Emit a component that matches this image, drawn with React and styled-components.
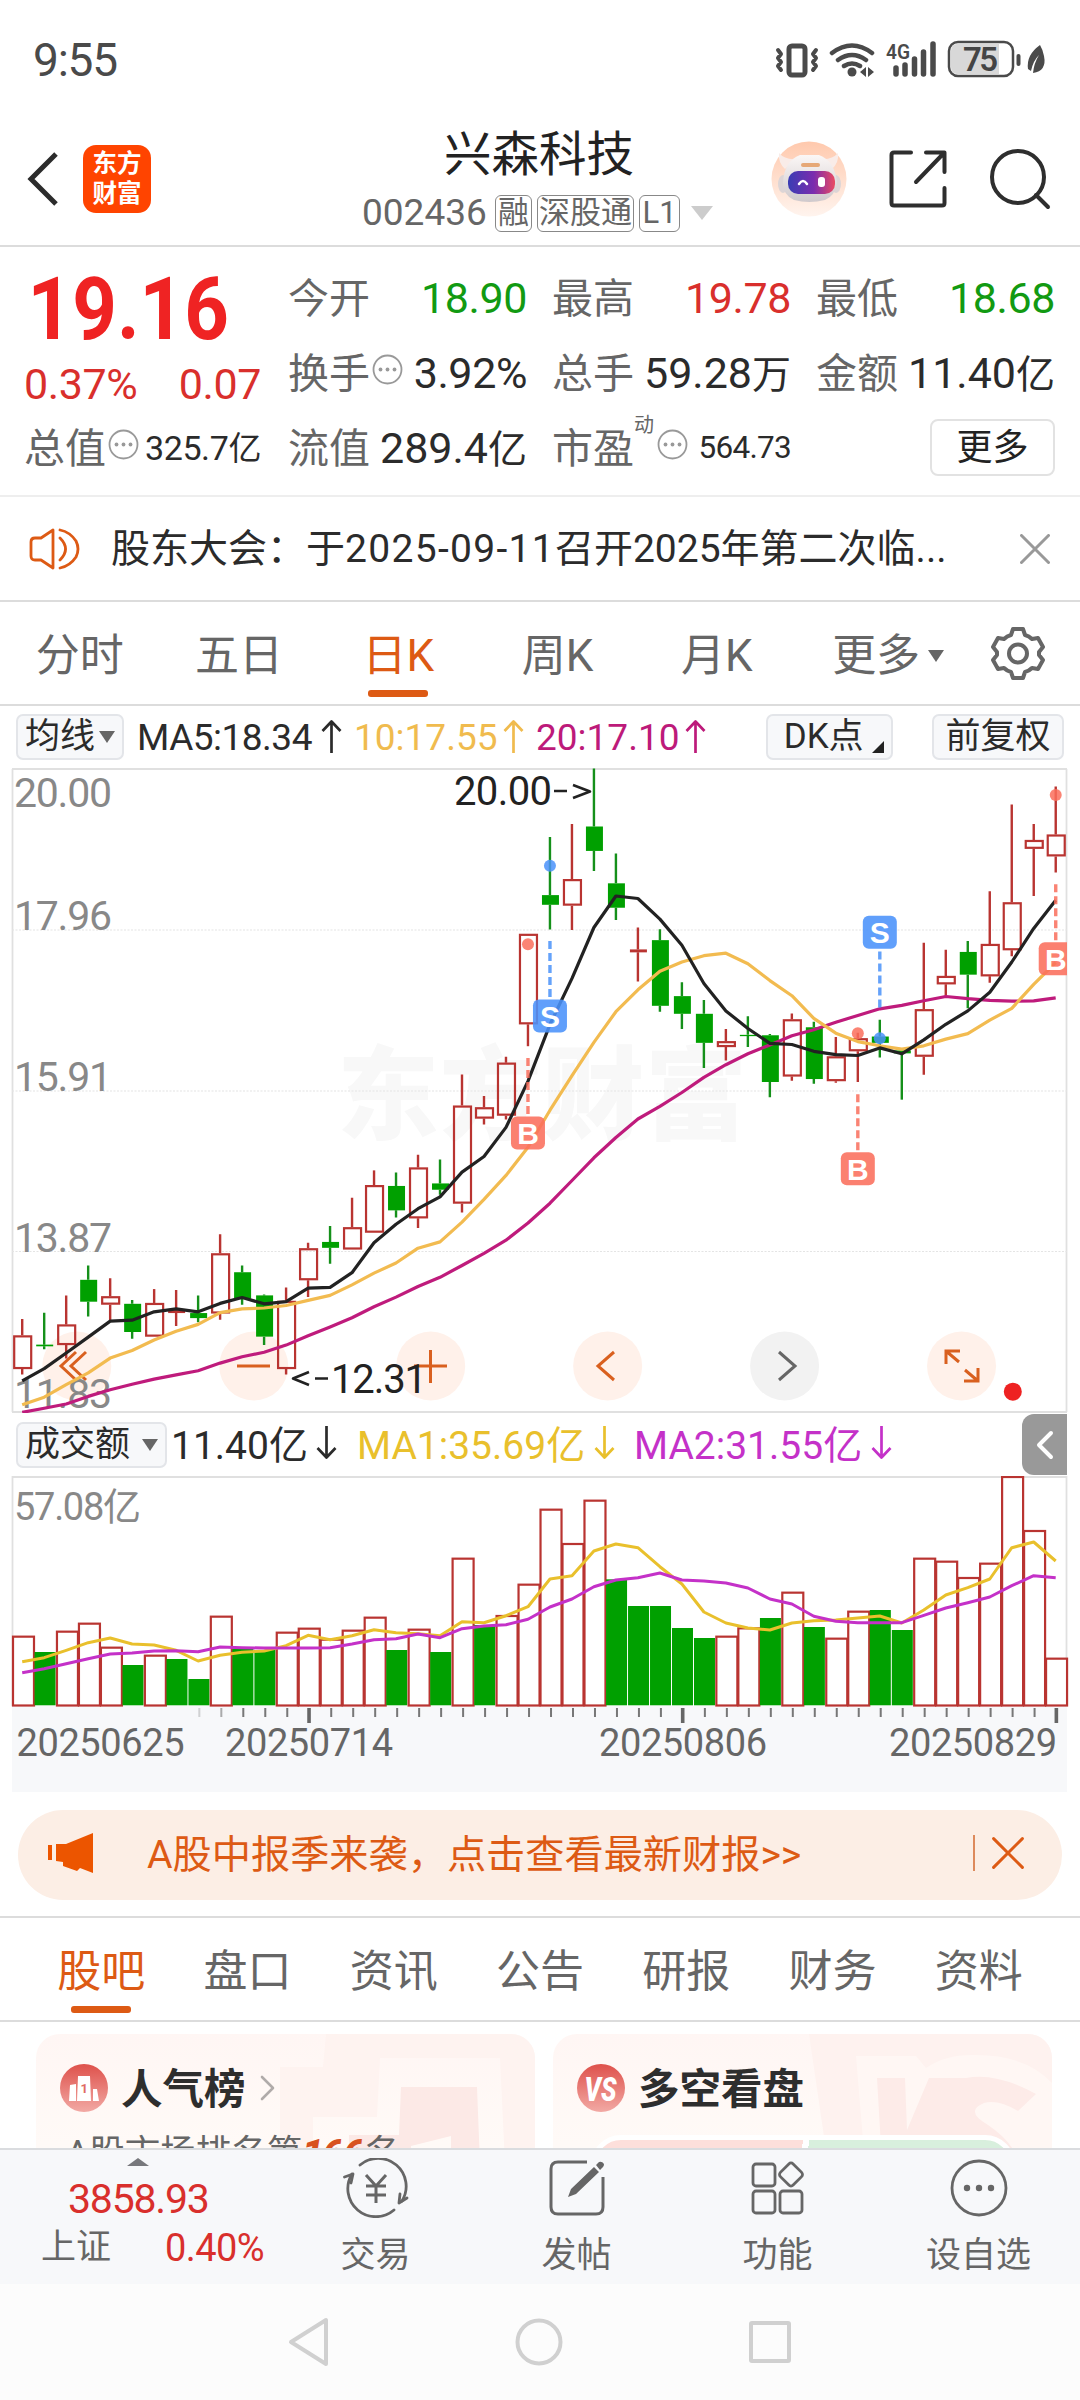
import styled, { createGlobalStyle } from "styled-components";

const ORANGE = "#dd5a14";
const RED = "#d92f2c";
const GREEN = "#129a12";
const DARK = "#2b2b2b";
const GREY = "#666";

const GlobalStyle = createGlobalStyle`
  * { box-sizing: border-box; }
  body {
    margin: 0;
    background: #fff;
    font-family: Roboto, "Noto Sans CJK SC", sans-serif;
    color: ${DARK};
  }
  svg { display: block; flex: none; }
`;

const Screen = styled.div`
  width: 1080px;
  height: 2400px;
  overflow: hidden;
  display: flex;
  flex-direction: column;
  background: #fff;
`;

/* ---------- status bar ---------- */
const StatusBar = styled.div`
  height: 116px;
  padding: 3px 33px 0 33px;
  display: flex;
  align-items: center;
  justify-content: space-between;
  color: #4a4a4a;
  font-size: 46px;
  letter-spacing: -1.2px;
`;

/* ---------- header ---------- */
const Header = styled.header`
  height: 131px;
  border-bottom: 2px solid #dcdcdc;
  padding: 0 29px 0 26px;
  display: grid;
  grid-template-columns: 338px 1fr 284px;
`;
const HeaderSide = styled.div`
  display: flex;
  align-items: center;
  justify-content: ${({ $end }) => ($end ? "flex-end" : "flex-start")};
  gap: ${({ $gap }) => $gap}px;
  padding-bottom: 3px;
`;
const Logo = styled.div`
  width: 68px;
  height: 68px;
  border-radius: 13px;
  background: #ff4400;
  color: #fff;
  font-size: 24.5px;
  font-weight: 700;
  line-height: 30px;
  padding-top: 4px;
  text-align: center;
`;
const TitleBlock = styled.div`
  padding-top: 11px;
`;
const StockName = styled.div`
  height: 56px;
  line-height: 56px;
  font-size: 47.5px;
  color: #222;
  padding-left: 80px;
`;
const StockMeta = styled.div`
  margin-top: 11px;
  display: flex;
  align-items: center;
  gap: 5px;
  color: ${GREY};
  font-size: 37px;
  line-height: 38px;
`;
const Code = styled.span`
  width: 126px;
  margin-left: -2px;
  margin-right: 2px;
`;
const Tag = styled.span`
  height: 37px;
  width: ${({ $w }) => $w}px;
  border: 1.5px solid #888;
  border-radius: 6px;
  font-size: 31px;
  line-height: 33px;
  text-align: center;
`;
const Caret = styled.i`
  width: 0;
  height: 0;
  margin: ${({ $m }) => $m || "0"};
  border: ${({ $s }) => $s || 8}px solid transparent;
  border-top: ${({ $h }) => $h || 12}px solid ${({ $c }) => $c || GREY};
  border-bottom: 0;
  flex: none;
`;

/* ---------- quote ---------- */
const Quote = styled.section`
  height: 250px;
  padding: 13px 25px 0 24px;
  border-bottom: 2px solid #eeeeee;
  display: flex;
`;
const PriceCol = styled.div`
  width: 237px;
  margin-right: 27px;
`;
const Price = styled.div`
  height: 98px;
  line-height: 98px;
  padding-left: 4px;
  font-size: 88px;
  font-weight: 700;
  color: #ef2323;
  white-space: nowrap;
  transform: scaleX(0.885);
  transform-origin: left;
`;
const Change = styled.div`
  height: 52px;
  line-height: 52px;
  display: flex;
  justify-content: space-between;
  font-size: 43px;
  color: ${RED};
  letter-spacing: -0.4px;
`;
const QuoteGrid = styled.div`
  display: grid;
  grid-template-columns: repeat(3, 239px);
  grid-auto-rows: 75px;
  column-gap: 25px;
`;
const Cell = styled.div`
  height: 75px;
  display: flex;
  align-items: center;
  justify-content: space-between;
  white-space: nowrap;
`;
const CellLabel = styled.span`
  display: flex;
  align-items: center;
  font-size: 41px;
  color: ${GREY};
  padding-bottom: 5px;
  svg { margin-left: 2px; margin-top: -1px; }
  sup { font-size: 20px; line-height: 20px; align-self: flex-start; margin-right: 1px; }
`;
const CellValue = styled.span`
  font-size: ${({ $size }) => $size || 43}px;
  color: ${({ $c }) => $c || DARK};
  letter-spacing: ${({ $ls }) => $ls ?? -0.4}px;
  small { font-size: ${({ $cjk }) => $cjk || 39}px; line-height: 1; }
`;
const MoreButton = styled.button`
  margin-left: auto;
  width: 125px;
  height: 57px;
  padding: 0;
  border: 2px solid #e2e2e2;
  border-radius: 8px;
  background: #fff;
  font: inherit;
  font-size: 36px;
  line-height: 48px;
  color: #222;
`;

/* ---------- notice ---------- */
const Notice = styled.section`
  height: 105px;
  border-bottom: 2px solid #dcdcdc;
  padding: 0 30px 0 29px;
  display: flex;
  align-items: center;
  font-size: 39px;
`;
const NoticeText = styled.div`
  flex: 1;
  margin-left: 30px;
  padding-bottom: 7px;
  white-space: nowrap;
  b { font-weight: 400; letter-spacing: 1.3px; }
`;

/* ---------- tabs ---------- */
const Tabs = styled.nav`
  height: 104px;
  border-bottom: 2px solid #dcdcdc;
  padding: ${({ $pad }) => $pad};
  display: flex;
`;
const Tab = styled.div`
  width: ${({ $w }) => $w}px;
  height: 102px;
  display: flex;
  flex-direction: column;
  align-items: center;
  font-size: 44px;
  line-height: 60px;
  padding-top: 24px;
  color: ${({ $on }) => ($on ? ORANGE : GREY)};
  span { display: flex; align-items: center; }
  &::after {
    content: "";
    width: 60px;
    height: 7px;
    border-radius: 3px;
    margin-top: 4px;
    background: ${({ $on }) => ($on ? ORANGE : "transparent")};
  }
`;
const GearBox = styled.div`
  flex: 1;
  display: flex;
  align-items: center;
  justify-content: center;
`;

/* ---------- indicator rows ---------- */
const IndicatorRow = styled.div`
  height: ${({ $h }) => $h}px;
  padding: 0 ${({ $right }) => $right}px 0 16px;
  display: flex;
  align-items: center;
  font-size: ${({ $size }) => $size}px;
`;
const Chip = styled.div`
  height: 46px;
  width: ${({ $w }) => $w}px;
  margin-right: ${({ $mr }) => $mr || 0}px;
  border: 2px solid #e3e5e9;
  border-radius: 7px;
  background: #f7f8fa;
  display: flex;
  align-items: center;
  justify-content: ${({ $between }) => ($between ? "space-between" : "center")};
  padding: 0 7px;
  font-size: 35px;
  line-height: 40px;
  white-space: nowrap;
  flex: none;
`;
const Corner = styled.i`
  align-self: flex-end;
  margin-bottom: 5px;
  border-left: 12px solid transparent;
  border-bottom: 12px solid #222;
`;
const Reading = styled.span`
  width: ${({ $w }) => $w}px;
  margin-left: ${({ $ml }) => $ml}px;
  padding-bottom: ${({ $lift }) => $lift || 0}px;
  color: ${({ $c }) => $c};
  display: flex;
  align-items: center;
  justify-content: space-between;
  letter-spacing: ${({ $ls }) => $ls || 0}px;
  white-space: nowrap;
`;
const Spacer = styled.div`
  flex: 1;
`;
const SideHandle = styled.div`
  width: 45px;
  height: 61px;
  border-radius: 12px 0 0 12px;
  background: #999;
  display: flex;
  align-items: center;
  justify-content: center;
`;

/* ---------- banner ---------- */
const BannerWrap = styled.div`
  padding: 18px 18px 16px;
  border-bottom: 2px solid #dcdcdc;
`;
const Banner = styled.div`
  height: 90px;
  border-radius: 45px;
  background: #fceee5;
  color: ${ORANGE};
  display: flex;
  align-items: center;
  padding: 0 38px 4px 30px;
  font-size: 39.2px;
`;
const BannerText = styled.div`
  flex: 1;
  margin-left: 54px;
  padding-bottom: 4px;
`;
const Divider = styled.i`
  width: 2px;
  height: 36px;
  background: #dd8a5c;
  margin-right: 17px;
`;

/* ---------- cards ---------- */
const Cards = styled.section`
  height: 126px;
  overflow: hidden;
  padding: 12px 28px 0 36px;
  display: flex;
  gap: 18px;
`;
const Card = styled.div`
  position: relative;
  width: 499px;
  height: 220px;
  border-radius: 24px;
  overflow: hidden;
  background: linear-gradient(#fff6f4, #fffaf7 50%);
`;
const CardArt = styled.div`
  position: absolute;
  inset: 0;
`;
const CardHead = styled.div`
  position: relative;
  display: flex;
  align-items: center;
  height: 60px;
  margin: 24px 0 0 24px;
  font-size: 41.5px;
  font-weight: 600;
  color: #2e2e2e;
  span { margin: -4px 13px 0 13px; }
`;
const RankLine = styled.div`
  position: relative;
  margin: 13px 0 0 30px;
  font-size: 35.5px;
  line-height: 44px;
  color: ${GREY};
  white-space: nowrap;
  em { font-weight: 900; font-size: 37px; color: #d8521f; }
`;
const VersusBar = styled.div`
  position: relative;
  margin: 17px auto 0;
  width: 424px;
  height: 60px;
  border: 5px solid #fff;
  border-radius: 32px;
  background: linear-gradient(100deg, #fddfdb 49%, #fff 49%, #fff 50.5%, #d8efdd 50.5%);
`;

/* ---------- bottom ---------- */
const BottomBar = styled.footer`
  height: 136px;
  border-top: 2px solid #dadcdf;
  background: #f7f8fa;
  display: flex;
`;
const IndexBox = styled.div`
  width: 275px;
  padding: 8px 11px 0 41px;
  color: ${RED};
  > svg { margin-left: 86px; }
`;
const IndexValue = styled.div`
  font-size: 41px;
  line-height: 48px;
  letter-spacing: -1.2px;
  margin: 9px 0 0 27px;
`;
const IndexRow = styled.div`
  display: flex;
  align-items: center;
  justify-content: space-between;
  font-size: 38px;
  line-height: 50px;
  letter-spacing: -0.6px;
  span { font-size: 35px; color: ${GREY}; letter-spacing: 0; }
`;
const BottomItem = styled.div`
  width: 201px;
  display: flex;
  flex-direction: column;
  align-items: center;
  padding-top: 8px;
  font-size: 35px;
  line-height: 44px;
  color: ${GREY};
  svg { margin-bottom: 16px; }
`;
const SystemNav = styled.div`
  flex: 1;
  background: #fcfcfc;
  display: flex;
  justify-content: center;
  align-items: center;
  gap: 185px;
  padding-bottom: 1px;
`;

const stroke = (color, width) => ({
  fill: "none",
  stroke: color,
  strokeWidth: width,
  strokeLinecap: "round",
  strokeLinejoin: "round",
});

/* ---------- icons ---------- */
const StatusIcons = () => (
  <svg width="274" height="44" viewBox="774 36 274 44">
    <g {...stroke("#4a4a4a", 4)}>
      <rect x="790" y="44" width="16" height="29" rx="3" strokeWidth="5" />
      <path d="M779 48l3 4-3 4 3 4-3 4 3 4M817 48l-3 4 3 4-3 4 3 4-3 4" />
      <path d="M833 51q20-15 40 0M839 58q14-10 28 0M845 64q8-5 16 0" strokeWidth="4.5" />
      <path d="M897 72v-6M906 72v-9M915.500 72v-15M924.500 72v-22M934 72v-30" strokeWidth="5.5" />
      <rect x="950" y="40" width="64" height="34" rx="9" strokeWidth="2.500" />
      <path d="M1019.500 54v8" strokeWidth="4" />
    </g>
    <circle cx="853" cy="70" r="4.500" fill="#4a4a4a" />
    <path d="M867 65v10l-6-5zM869 65v10l6-5z" fill="#4a4a4a" />
    <path d="M958 42h42v30h-42q-6 0-6-7v-16q0-7 6-7z" fill="#d8d8d8" />
    <text x="887" y="57" fontSize="21" fontWeight="600" fill="#4a4a4a" textLength="24" lengthAdjust="spacingAndGlyphs" letterSpacing="0">4G</text>
    <text x="964" y="69" fontSize="33" fontWeight="600" fill="#444" textLength="35" letterSpacing="0">75</text>
    <path d="M1041 43q-14 10-12 24l3 2q2-10 8-16-5 8-6 18 14-2 11-17-1-6-4-11z" fill="#4a4a4a" />
  </svg>
);

const BackIcon = () => (
  <svg width="34" height="56" viewBox="0 0 34 56">
    <path d="M30 3L5 28l25 25" {...stroke("#2c2c2c", 5)} strokeLinecap="butt" strokeLinejoin="miter" />
  </svg>
);

const RobotIcon = () => (
  <svg width="76" height="76" viewBox="0 0 76 76">
    <defs>
      <linearGradient id="halo" x2="0" y2="1">
        <stop offset="0" stopColor="#ffc9ad" />
        <stop offset="1" stopColor="#fff4ee" />
      </linearGradient>
      <linearGradient id="visor">
        <stop offset="0" stopColor="#3a3db4" />
        <stop offset="0.55" stopColor="#7b2cae" />
        <stop offset="1" stopColor="#ea4a62" />
      </linearGradient>
      <linearGradient id="shell" x2="0" y2="1">
        <stop offset="0" stopColor="#fbf7f6" />
        <stop offset="1" stopColor="#cfc9cc" />
      </linearGradient>
    </defs>
    <circle cx="38" cy="38" r="37.500" fill="url(#halo)" />
    <path d="M8 12q-1 10 6 16l11-10q-11 1-17-6zM67 12q1 10-6 16L50 18q11 1 17-6z" fill="#f9ece8" />
    <ellipse cx="12" cy="43" rx="5" ry="9" fill="#ddd5d6" />
    <ellipse cx="65" cy="43" rx="5" ry="9" fill="#ddd5d6" />
    <path d="M29 14h19q16 6 18 28-2 13-12 17-16 4-31 0-11-5-11-17 1-22 17-28z" fill="url(#shell)" />
    <rect x="30" y="22" width="19" height="4" rx="2" fill="#e6a877" />
    <rect x="17" y="30" width="47" height="23" rx="10" fill="url(#visor)" />
    <path d="M28 43q4-6 8 0" {...stroke("#fff", 2.5)} />
    <rect x="47" y="36" width="7" height="10" rx="3" fill="#fff" />
  </svg>
);

const ShareIcon = () => (
  <svg width="58" height="58" viewBox="0 0 58 58">
    <g {...stroke("#2e2e2e", 4)}>
      <path d="M22 2.500H5q-2.500 0-2.500 2.500v48q0 2.500 2.500 2.500h48q2.500 0 2.500-2.500V38" />
      <path d="M37 2.500h18.500V22M54 4L27 32" />
    </g>
  </svg>
);

const SearchIcon = () => (
  <svg width="62" height="62" viewBox="0 0 62 62">
    <circle cx="29" cy="29" r="26" {...stroke("#2e2e2e", 4)} />
    <path d="M47 47l12 12" {...stroke("#2e2e2e", 4)} />
  </svg>
);

const InfoDots = () => (
  <svg width="31" height="31" viewBox="0 0 31 31">
    <circle cx="15.500" cy="15.500" r="14" {...stroke("#999", 1.8)} />
    {[8.5, 15.5, 22.5].map((x) => (
      <circle key={x} cx={x} cy="15.500" r="1.900" fill="#999" />
    ))}
  </svg>
);

const SpeakerIcon = () => (
  <svg width="52" height="44" viewBox="0 0 52 44">
    <g {...stroke(ORANGE, 2.8)}>
      <path d="M24 3v38L12 33H6q-4 0-4-4V15q0-4 4-4h6z" />
      <path d="M31 11q11 11 0 22M31 3q10 2 16 11 4 8 0 16-6 9-16 11" />
    </g>
  </svg>
);

const CrossIcon = ({ size, color, width }) => (
  <svg width={size} height={size} viewBox="0 0 30 30">
    <path d="M1.500 1.500l27 27M28.500 1.500l-27 27" {...stroke(color, width)} />
  </svg>
);

const GearIcon = () => (
  <svg width="54" height="54" viewBox="0 0 54 54">
    <path
      d="M22 3h10l2 6q4 1 7 4l6-1 5 9-4 5v3l4 5-5 9-6-1q-3 3-7 4l-2 6H22l-2-6q-4-1-7-4l-6 1-5-9 4-5v-3l-4-5 5-9 6 1q3-3 7-4z"
      {...stroke(GREY, 4)}
    />
    <circle cx="27" cy="27.500" r="9" {...stroke(GREY, 4)} />
  </svg>
);

const ArrowIcon = ({ down, color }) => (
  <svg width="21" height="34" viewBox="0 0 21 34">
    <path
      d={down ? "M10.500 1v31M1.500 23l9 9.500 9-9.500" : "M10.500 33V2M1.500 11l9-9.500 9 9.500"}
      {...stroke(color, 2.7)}
      strokeLinecap="butt"
    />
  </svg>
);

const HornIcon = () => (
  <svg width="45" height="40" viewBox="0 0 45 40">
    <path d="M0 12h4v15H0zM8 11h10L45 0v40l-13-5-3 3-14-5v-4l-7-1z" fill="#ec5500" />
  </svg>
);

const CoinIcon = () => (
  <svg width="66" height="60" viewBox="0 0 66 60">
    <g {...stroke(GREY, 2.8)}>
      <path d="M17 7a28 28 0 0 1 42 36M51 52A28 28 0 0 1 9 16" />
      <path d="M1.500 19L10 16l-2 9M64 40l-8 5 1-9" />
      <path d="M23 17l10 11 10-11M23 28h20M23 37h20M33 28v17" strokeWidth="3" strokeLinecap="butt" />
    </g>
  </svg>
);

const PostIcon = () => (
  <svg width="56" height="60" viewBox="0 0 56 60">
    <path d="M38 4H9q-7 0-7 7v38q0 7 7 7h38q7 0 7-7V19" {...stroke(GREY, 3)} strokeLinecap="butt" />
    <path d="M19 39l3-8 23-22 5 5-23 22zM47 7l3-3q3-1 5 2 0 2-1 3l-3 3z" fill={GREY} />
  </svg>
);

const AppsIcon = () => (
  <svg width="54" height="60" viewBox="0 0 54 60">
    <g {...stroke(GREY, 2.8)}>
      <rect x="2" y="6" width="22" height="22" rx="3" />
      <rect x="2" y="33" width="22" height="22" rx="3" />
      <rect x="29" y="33" width="22" height="22" rx="3" />
      <rect x="31" y="7.500" width="18" height="18" rx="3" transform="rotate(45 40 16.500)" />
    </g>
  </svg>
);

const MoreIcon = () => (
  <svg width="58" height="60" viewBox="0 0 58 60">
    <circle cx="29" cy="30" r="27" {...stroke(GREY, 2.8)} />
    {[17, 29, 41].map((x) => (
      <circle key={x} cx={x} cy="30" r="3.200" fill={GREY} />
    ))}
  </svg>
);

const Badge = ({ children }) => (
  <svg width="48" height="48" viewBox="0 0 48 48">
    <defs>
      <linearGradient id="badge" x2="0" y2="1">
        <stop offset="0" stopColor="#de514b" />
        <stop offset="1" stopColor="#f2a9a4" />
      </linearGradient>
    </defs>
    <circle cx="24" cy="24" r="24" fill="url(#badge)" />
    {children}
  </svg>
);

/* ---------- chart data ---------- */
const STEP = 21.99;
const candleX = (i) => 22.2 + i * STEP;
const priceY = (v) => 760 + v * 0.4209;
const volumeY = (v) => 1400 + v / 3;

// [rise, high, body top, body bottom, low]
const candles = [
  [1, 1328, 1367, 1447, 1460], [0, 1313, 1389, 1393, 1400], [1, 1272, 1341, 1390, 1422],
  [0, 1201, 1235, 1287, 1322], [1, 1231, 1274, 1294, 1331], [0, 1283, 1292, 1359, 1375],
  [1, 1257, 1290, 1370, 1370], [1, 1259, 1307, 1314, 1345], [0, 1272, 1314, 1326, 1336],
  [1, 1127, 1172, 1315, 1330], [0, 1201, 1217, 1280, 1294], [0, 1270, 1272, 1370, 1390],
  [1, 1253, 1285, 1447, 1460], [1, 1147, 1160, 1236, 1276], [0, 1107, 1145, 1159, 1197],
  [1, 1040, 1110, 1163, 1163], [1, 975, 1010, 1123, 1123], [0, 980, 1012, 1070, 1087],
  [1, 938, 968, 1089, 1112], [0, 949, 1006, 1021, 1033], [1, 747, 821, 1054, 1075],
  [1, 798, 825, 852, 866], [1, 705, 719, 845, 854], [1, 413, 413, 628, 680],
  [0, 183, 321, 344, 403], [1, 152, 283, 346, 404], [0, 20, 158, 216, 264],
  [0, 222, 293, 351, 380], [1, 398, 450, 457, 526], [0, 402, 428, 584, 598],
  [0, 528, 561, 603, 639], [0, 570, 603, 672, 732], [1, 639, 668, 682, 714],
  [0, 609, 653, 655, 682], [0, 651, 654, 765, 801], [1, 602, 616, 752, 762],
  [0, 622, 635, 758, 769], [1, 658, 704, 763, 767], [1, 648, 661, 692, 765],
  [0, 617, 657, 672, 707], [0, 690, 690, 697, 807], [1, 434, 592, 705, 748],
  [1, 451, 513, 533, 560], [0, 430, 456, 510, 590], [1, 312, 437, 514, 529],
  [1, 106, 338, 452, 466], [1, 152, 190, 211, 323], [1, 63, 177, 229, 267],
];
const ma5 = [1475, 1446, 1409, 1371, 1333, 1331, 1311, 1304, 1311, 1291, 1277, 1292, 1287, 1255, 1253, 1218, 1147, 1103, 1066, 1038, 979, 942, 873, 763, 628, 519, 398, 323, 329, 378, 440, 531, 596, 638, 673, 676, 692, 700, 702, 684, 698, 665, 628, 596, 552, 480, 400, 333];
const ma10 = [1532, 1514, 1484, 1456, 1421, 1403, 1378, 1357, 1341, 1313, 1304, 1302, 1296, 1284, 1272, 1247, 1219, 1195, 1160, 1145, 1098, 1044, 987, 920, 832, 750, 671, 598, 546, 502, 480, 465, 459, 484, 524, 560, 614, 649, 669, 679, 687, 679, 663, 650, 618, 590, 533, 481];
const ma20 = [1550, 1540, 1530, 1512, 1496, 1483, 1471, 1461, 1451, 1433, 1418, 1407, 1390, 1368, 1347, 1325, 1299, 1276, 1251, 1229, 1201, 1172, 1141, 1100, 1053, 999, 945, 897, 853, 823, 790, 754, 724, 698, 677, 655, 641, 623, 607, 591, 583, 572, 562, 567, 571, 573, 572, 565];

const volumes = [707, 756, 692, 668, 740, 795, 764, 777, 837, 647, 747, 750, 695, 683, 716, 689, 650, 750, 686, 756, 473, 675, 645, 551, 326, 429, 299, 538, 618, 618, 684, 714, 707, 682, 654, 575, 681, 713, 632, 630, 690, 473, 482, 531, 488, 228, 390, 773];
const falling = [1, 5, 7, 8, 10, 11, 17, 19, 21, 27, 28, 29, 30, 31, 34, 36, 39, 40];
const vma1 = [785, 773, 751, 728, 714, 732, 735, 751, 783, 766, 757, 753, 737, 706, 719, 707, 689, 698, 701, 707, 665, 668, 647, 620, 537, 527, 453, 432, 443, 500, 552, 636, 669, 684, 690, 669, 662, 660, 654, 648, 669, 630, 585, 563, 537, 443, 426, 483];
const vma2 = [818, 806, 791, 776, 762, 759, 753, 752, 755, 741, 743, 744, 744, 744, 743, 732, 719, 716, 702, 713, 686, 678, 674, 658, 621, 597, 560, 540, 533, 519, 540, 543, 549, 564, 597, 612, 649, 664, 668, 668, 668, 646, 624, 608, 591, 557, 527, 533];

// kind, candle index, dot, dash start, dash end, box centre
const signals = [
  ["B", 23, 438, 708, 847, 886],
  ["S", 24, 251, 430, 569, 608],
  ["B", 38, 649, 794, 932, 971],
  ["S", 39, 661, 455, 594, 409],
  ["B", 47, 83, 295, 433, 472],
];

const line = (values, scale) =>
  values.map((v, i) => `${candleX(i).toFixed(1)},${scale(v).toFixed(1)}`).join(" ");

const Candle = ({ index, data }) => {
  const [rise, high, top, bottom, low] = data;
  const x = candleX(index);
  const y1 = priceY(top);
  const y2 = priceY(bottom);
  const color = rise ? "#b93431" : "#00a000";
  const wick = rise ? "#b93431" : "#15901a";
  return (
    <g>
      <path d={`M${x} ${priceY(high)}V${y1}M${x} ${y2}V${priceY(low)}`} stroke={wick} strokeWidth="2.4" />
      {rise && y2 - y1 > 4 ? (
        <rect x={x - 8} y={y1 + 1} width="17" height={y2 - y1 - 2} fill="none" stroke={color} strokeWidth="2.2" />
      ) : (
        <rect x={x - 8} y={y1} width="17" height={Math.max(y2 - y1, 1.3)} fill={color} />
      )}
    </g>
  );
};

const Signal = ({ data }) => {
  const [kind, index, dot, from, to, box] = data;
  const x = candleX(index);
  const color = kind === "B" ? "#fa6e5c" : "#4a92fa";
  return (
    <g>
      <circle cx={x} cy={priceY(dot)} r="6" fill={color} opacity="0.85" />
      <path d={`M${x} ${priceY(from)}V${priceY(to)}`} stroke={color} strokeWidth="3.4" strokeDasharray="8 4" opacity="0.85" />
      <rect x={x - 17} y={priceY(box) - 16.5} width="34" height="33" rx="6" fill={color} opacity="0.88" />
      <text x={x} y={priceY(box) + 11} fontSize="30" fontWeight="700" fill="#fff" textAnchor="middle" fontFamily="Liberation Sans">
        {kind}
      </text>
    </g>
  );
};

const controls = [
  { d: "M76 1352l-15 14 15 14M86 1352l-15 14 15 14" },
  { d: "M237 1366h33" },
  { d: "M414 1366h33M430.500 1350v33" },
  { d: "M614 1352l-16 14 16 14" },
  { d: "M779 1352l16 14-16 14", muted: true },
  { d: "M959 1362l-13-11M946 1364v-13h14M965 1370l13 11M978 1368v13h-14" },
];

const PriceChart = () => (
  <svg width="1080" height="645" viewBox="0 768 1080 645">
    <clipPath id="plot">
      <rect x="12" y="768" width="1055" height="645" />
    </clipPath>
    <text x="337" y="1132" fontSize="102" fontWeight="900" fill="#f8f8f8" textLength="410">东方财富</text>
    <path d="M12.500 769V1412M1066.500 769V1412" stroke="#e0e0e0" strokeWidth="1.800" />
    <path d="M12 769H1067M12 1412H1067" stroke="#e0e0e0" strokeWidth="2" />
    <path d="M12 930H1067M12 1091H1067M12 1251.500H1067" stroke="#e4e4e4" strokeWidth="1.200" strokeDasharray="2 1.500" />
    {controls.map(({ d, muted }, i) => (
      <g key={d}>
        <circle cx={76.8 + i * 176.95} cy="1366" r="34.500" fill={muted ? "#f2f2f2" : "#fff1ea"} />
        <path d={d} fill="none" stroke={muted ? GREY : "#d9601f"} strokeWidth="3" />
      </g>
    ))}
    <g fontSize="41" fill="#888">
      <text x="14" y="807" textLength="98">20.00</text>
      <text x="14" y="930" textLength="98">17.96</text>
      <text x="14" y="1090.500" textLength="98">15.91</text>
      <text x="14" y="1252" textLength="98">13.87</text>
      <text x="14" y="1408" textLength="98">11.83</text>
    </g>
    <g clipPath="url(#plot)">
      {candles.map((c, i) => (
        <Candle key={i} index={i} data={c} />
      ))}
      <g fill="none" strokeWidth="3.200" strokeLinejoin="round">
        <polyline points={line(ma20, priceY)} stroke="#bf1b7c" />
        <polyline points={line(ma10, priceY)} stroke="#f2bb50" />
        <polyline points={line(ma5, priceY)} stroke="#222" />
      </g>
      {signals.map((s) => (
        <Signal key={s[1]} data={s} />
      ))}
    </g>
    <g fontSize="40" fill="#222">
      <text x="454" y="805" textLength="98">20.00</text>
      <path d="M554 791h13M573 785l17 6.500-17 6.500" {...stroke("#222", 2.6)} strokeLinecap="butt" />
      <path d="M309 1372l-16 6.500 16 6.500M315 1378.500h13" {...stroke("#222", 2.6)} strokeLinecap="butt" />
      <text x="331" y="1393" textLength="96">12.31</text>
    </g>
    <circle cx="1012.800" cy="1391.700" r="9" fill="#ee2222" />
  </svg>
);

const VolumeChart = () => (
  <svg width="1080" height="316" viewBox="0 1476 1080 316">
    <rect x="12" y="1706" width="1055" height="86" fill="#f7f8fa" />
    <path d="M12.500 1706V1477H1066.500V1706" fill="none" stroke="#e0e0e0" strokeWidth="1.800" />
    <text x="14" y="1520" fontSize="38" fill="#888" textLength="127">57.08亿</text>
    {volumes.map((v, i) => {
      const x = 12 + i * 21.98;
      const y = volumeY(v);
      return falling.includes(i) ? (
        <rect key={i} x={x + 0.6} y={y} width="21" height={1705.3 - y} fill="#00a000" />
      ) : (
        <rect key={i} x={x + 1} y={y + 1} width="21" height={1704.5 - y} fill="#fff" stroke="#b93431" strokeWidth="2.2" />
      );
    })}
    <g fill="none" strokeWidth="3" strokeLinejoin="round">
      <polyline points={line(vma1, volumeY)} stroke="#e9c02c" />
      <polyline points={line(vma2, volumeY)} stroke="#c431c8" />
    </g>
    {volumes.map((_, i) => {
      if (i < 8) return null;
      const major = i === 13 || i === 30 || i === 47;
      return (
        <rect
          key={i}
          x={22.5 + i * 21.98 - (major ? 1 : 0)}
          y="1708"
          width={major ? 3.6 : 2}
          height={major ? 15 : 9}
          fill={major ? "#666" : "#777"}
          opacity={i === 8 ? 0.3 : i === 9 ? 0.6 : 1}
        />
      );
    })}
    <g fontSize="38" fill={GREY}>
      <text x="16.500" y="1756" textLength="168">20250625</text>
      <text x="225" y="1756" textLength="168">20250714</text>
      <text x="599" y="1756" textLength="168">20250806</text>
      <text x="889" y="1756" textLength="168">20250829</text>
    </g>
  </svg>
);

const periods = ["分时", "五日", "日K", "周K", "月K"];
const sections = ["股吧", "盘口", "资讯", "公告", "研报", "财务", "资料"];
const actions = [
  ["交易", CoinIcon],
  ["发帖", PostIcon],
  ["功能", AppsIcon],
  ["设自选", MoreIcon],
];

export default function App() {
  return (
    <>
      <GlobalStyle />
      <Screen>
        <StatusBar>
          <span>9:55</span>
          <StatusIcons />
        </StatusBar>

        <Header>
          <HeaderSide $gap={23}>
            <BackIcon />
            <Logo>
              东方
              <br />
              财富
            </Logo>
          </HeaderSide>
          <TitleBlock>
            <StockName>兴森科技</StockName>
            <StockMeta>
              <Code>002436</Code>
              <Tag $w={37}>融</Tag>
              <Tag $w={97}>深股通</Tag>
              <Tag $w={41}>L1</Tag>
              <Caret $c="#ccc" $s={11} $h={14} $m="0 0 0 6px" />
            </StockMeta>
          </TitleBlock>
          <HeaderSide $end $gap={42}>
            <RobotIcon />
            <ShareIcon />
            <SearchIcon />
          </HeaderSide>
        </Header>

        <Quote>
          <PriceCol>
            <Price>19.16</Price>
            <Change>
              <span>0.37%</span>
              <span>0.07</span>
            </Change>
            <Cell>
              <CellLabel>总值<InfoDots /></CellLabel>
              <CellValue $size={34} $cjk={33}>325.7<small>亿</small></CellValue>
            </Cell>
          </PriceCol>
          <QuoteGrid>
            <Cell>
              <CellLabel>今开</CellLabel>
              <CellValue $c={GREEN}>18.90</CellValue>
            </Cell>
            <Cell>
              <CellLabel>最高</CellLabel>
              <CellValue $c={RED}>19.78</CellValue>
            </Cell>
            <Cell>
              <CellLabel>最低</CellLabel>
              <CellValue $c={GREEN}>18.68</CellValue>
            </Cell>
            <Cell>
              <CellLabel>换手<InfoDots /></CellLabel>
              <CellValue>3.92%</CellValue>
            </Cell>
            <Cell>
              <CellLabel>总手</CellLabel>
              <CellValue $ls={0}>59.28<small>万</small></CellValue>
            </Cell>
            <Cell>
              <CellLabel>金额</CellLabel>
              <CellValue $ls={0}>11.40<small>亿</small></CellValue>
            </Cell>
            <Cell>
              <CellLabel>流值</CellLabel>
              <CellValue $ls={0}>289.4<small>亿</small></CellValue>
            </Cell>
            <Cell>
              <CellLabel>市盈<sup>动</sup><InfoDots /></CellLabel>
              <CellValue $size={31.5} $ls={-0.7}>564.73</CellValue>
            </Cell>
            <Cell>
              <MoreButton>更多</MoreButton>
            </Cell>
          </QuoteGrid>
        </Quote>

        <Notice>
          <SpeakerIcon />
          <NoticeText>
            股东大会：于<b>2025-09-11</b>召开2025年第二次临...
          </NoticeText>
          <CrossIcon size={30} color="#999" width={3} />
        </Notice>

        <Tabs $pad="0">
          {periods.map((name) => (
            <Tab key={name} $w={159.3} $on={name === "日K"}>
              <span>{name}</span>
            </Tab>
          ))}
          <Tab $w={159.3}>
            <span>
              更多
              <Caret $m="0 -24px 0 8px" />
            </span>
          </Tab>
          <GearBox>
            <GearIcon />
          </GearBox>
        </Tabs>

        <IndicatorRow $h={62} $right={16} $size={37}>
          <Chip $w={108} $between>
            均线
            <Caret />
          </Chip>
          <Reading $w={205} $ml={13} $c={DARK} $ls={-0.5}>
            MA5:18.34
            <ArrowIcon color={DARK} />
          </Reading>
          <Reading $w={170} $ml={12} $c="#f0bb4e">
            10:17.55
            <ArrowIcon color="#f0bb4e" />
          </Reading>
          <Reading $w={170} $ml={12} $c="#bd1a7a">
            20:17.10
            <ArrowIcon color="#bd1a7a" />
          </Reading>
          <Spacer />
          <Chip $w={127} $mr={39} $between>
            <span>&nbsp;DK点</span>
            <Corner />
          </Chip>
          <Chip $w={132}>前复权</Chip>
        </IndicatorRow>
        <PriceChart />

        <IndicatorRow $h={63} $right={13} $size={39}>
          <Chip $w={151} $between>
            成交额
            <Caret />
          </Chip>
          <Reading $w={166} $ml={4} $lift={5} $c={DARK}>
            11.40亿
            <ArrowIcon down color={DARK} />
          </Reading>
          <Reading $w={258} $ml={20} $lift={5} $c="#e9c02c">
            MA1:35.69亿
            <ArrowIcon down color="#e9c02c" />
          </Reading>
          <Reading $w={258} $ml={19} $lift={5} $c="#c431c8">
            MA2:31.55亿
            <ArrowIcon down color="#c431c8" />
          </Reading>
          <Spacer />
          <SideHandle>
            <svg width="18" height="30" viewBox="0 0 18 30">
              <path d="M15 3L3 15l12 12" {...stroke("#fff", 4)} />
            </svg>
          </SideHandle>
        </IndicatorRow>
        <VolumeChart />

        <BannerWrap>
          <Banner>
            <HornIcon />
            <BannerText>A股中报季来袭，点击查看最新财报&gt;&gt;</BannerText>
            <Divider />
            <CrossIcon size={32} color={ORANGE} width={2.8} />
          </Banner>
        </BannerWrap>

        <Tabs $pad="0 28px">
          {sections.map((name) => (
            <Tab key={name} $w={146.3} $on={name === "股吧"}>
              <span>{name}</span>
            </Tab>
          ))}
        </Tabs>

        <Cards>
          <Card>
            <CardArt>
              <svg width="499" height="130" viewBox="0 0 499 130">
                <path d="M290 0h209v130h-30l-5-106H344l-3 59h-64v47h-33V33h43z" fill="#fef3f0" />
                <path d="M365 53h76l3 77h-29v-28l-40 10v18h-62v-29h50z" fill="#fce9e6" />
              </svg>
            </CardArt>
            <CardHead>
              <Badge>
                <path d="M10 21l6-1v17H9zM18 12h12l1 25H17zM33 25h4l2 12h-6z" fill="#fff" />
                <text x="20.500" y="29" fontSize="13" fontWeight="700" fill="#e06a64">1</text>
              </Badge>
              <span>人气榜</span>
              <svg width="16" height="26" viewBox="0 0 16 26">
                <path d="M3 2l11 11L3 24" {...stroke("#b0abaa", 2.6)} />
              </svg>
            </CardHead>
            <RankLine>
              A股市场排名第<em>166</em>名
            </RankLine>
          </Card>
          <Card>
            <CardArt>
              <svg width="499" height="130" viewBox="0 0 499 130">
                <path d="M256 0h243v130H275z" fill="#fef2ef" />
                <path d="M303 22h60l10 12q20-14 50-13 50 0 76 28v81H312z" fill="#fff7f4" />
                <path d="M324 44h28l2 52 22-52h37q30-6 70 16l-18 17q-20-12-34-8-20 8 4 22 18 12 26 26v13H384l-8-27-12 27h-35z" fill="#fdebe8" />
              </svg>
            </CardArt>
            <CardHead>
              <Badge>
                <text x="7.500" y="37" fontSize="33" fontWeight="900" fontStyle="italic" fill="#fff" textLength="32" lengthAdjust="spacingAndGlyphs">VS</text>
              </Badge>
              <span>多空看盘</span>
            </CardHead>
            <VersusBar />
          </Card>
        </Cards>

        <BottomBar>
          <IndexBox>
            <svg width="22" height="8" viewBox="0 0 22 8">
              <path d="M11 0l11 8H0z" fill="#77787c" />
            </svg>
            <IndexValue>3858.93</IndexValue>
            <IndexRow>
              <span>上证</span>
              0.40%
            </IndexRow>
          </IndexBox>
          {actions.map(([name, Icon]) => (
            <BottomItem key={name}>
              <Icon />
              {name}
            </BottomItem>
          ))}
        </BottomBar>

        <SystemNav>
          <svg width="42" height="50" viewBox="0 0 42 50">
            <path d="M38 3v44L3 25z" {...stroke("#d0d0d0", 4)} />
          </svg>
          <svg width="48" height="50" viewBox="0 0 48 50">
            <circle cx="24" cy="25" r="21.500" {...stroke("#d0d0d0", 4)} />
          </svg>
          <svg width="44" height="50" viewBox="0 0 44 50">
            <rect x="3" y="6" width="38" height="38" rx="1" {...stroke("#d0d0d0", 4)} />
          </svg>
        </SystemNav>
      </Screen>
    </>
  );
}
